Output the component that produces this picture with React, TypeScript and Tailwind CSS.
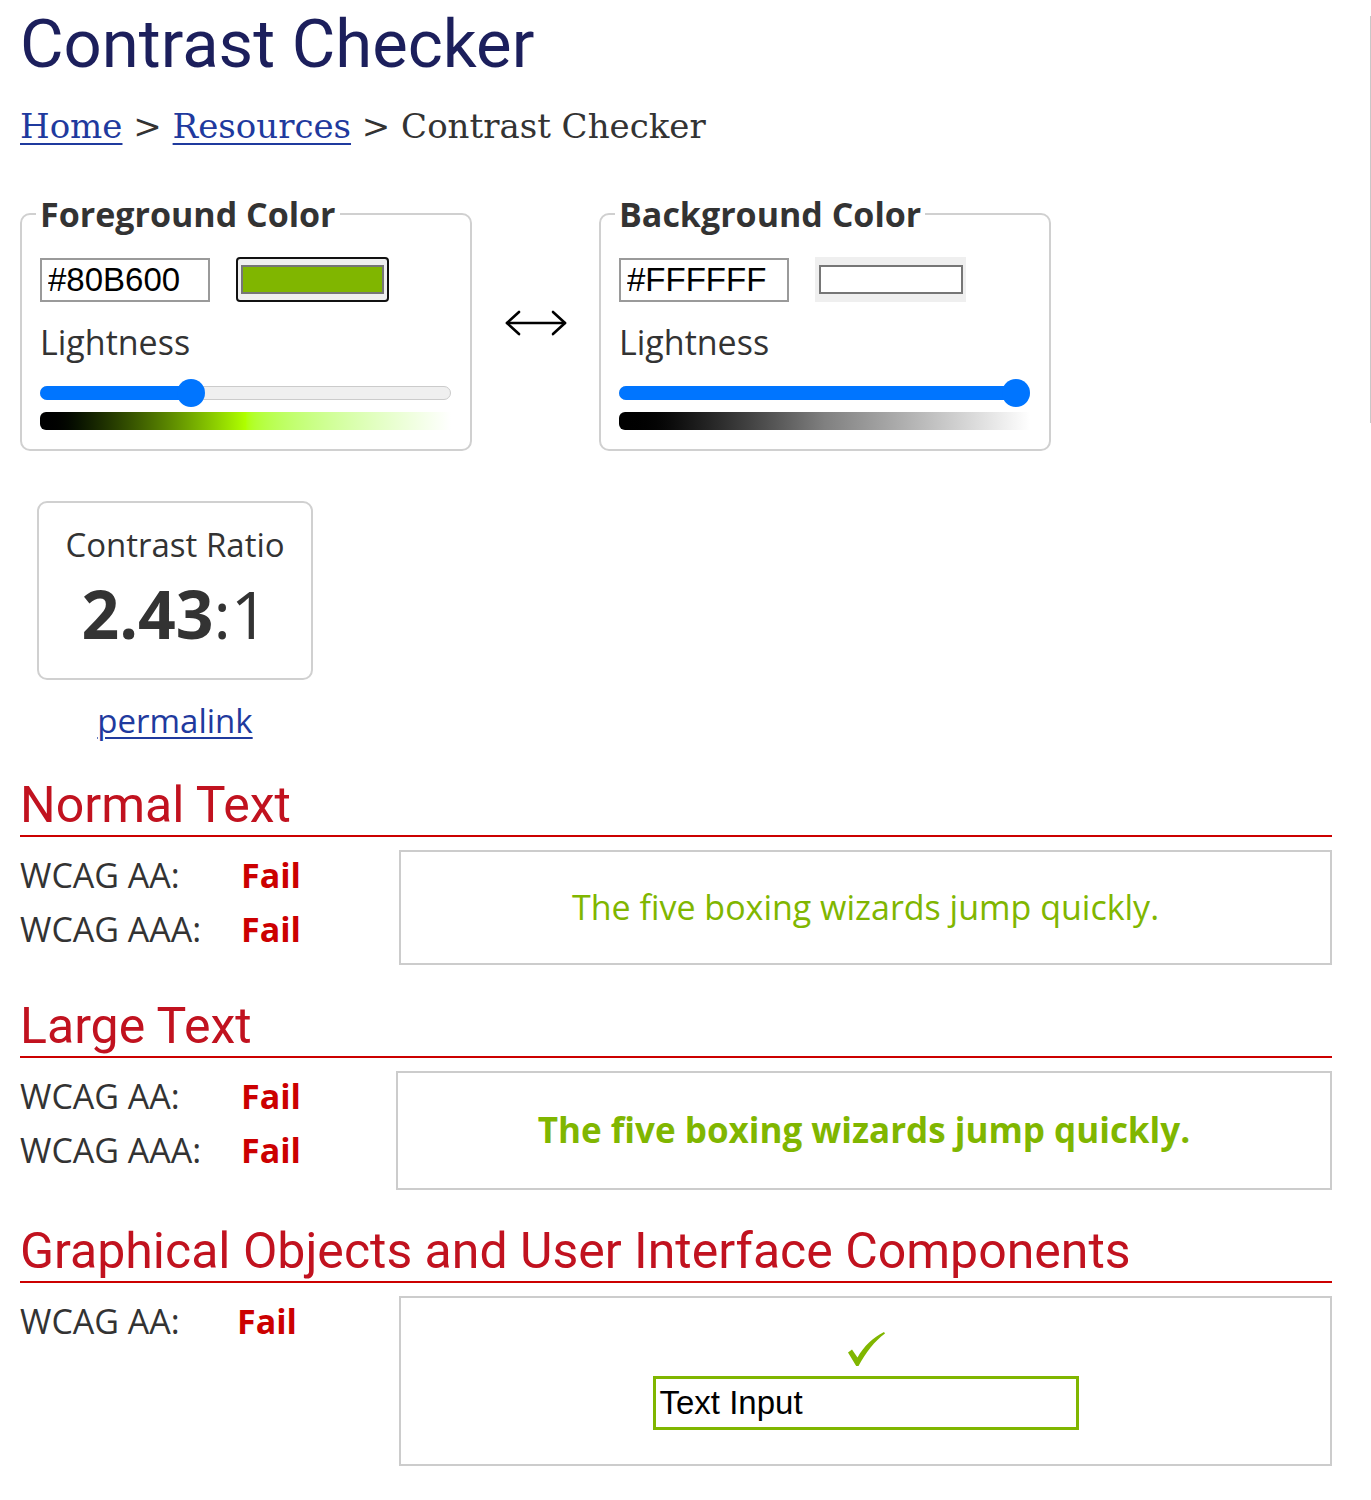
type ColorPickerProps = {
  legend: string;
  hex: string;
  swatchClass: string;
  focused?: boolean;
  value: number;
  gradientClass: string;
};

function Swatch({ swatchClass, focused }: { swatchClass: string; focused?: boolean }) {
  if (focused) {
    return (
      <div className="flex h-[45px] w-[153px] rounded-[4px] border-2 border-[#111] bg-[#efefef] px-[3px] py-[6px]">
        <div className={`flex-1 border-2 border-[#767676] ${swatchClass}`} />
      </div>
    );
  }
  return (
    <div className="flex h-[45px] w-[151px] bg-[#efefef] py-2 pl-1 pr-[3px]">
      <div className={`flex-1 border-2 border-[#767676] ${swatchClass}`} />
    </div>
  );
}

// value is 0..1, the thumb centre runs from 14px to (width - 14px)
function Slider({ value }: { value: number }) {
  return (
    <div className="relative h-7">
      <div className="absolute inset-x-0 top-[7px] h-[14px] rounded-full border border-[#cbcbcb] bg-[#efefef]" />
      <div
        className="absolute left-0 top-[7px] h-[14px] rounded-full bg-[#0075ff]"
        style={{ width: `calc(14px + ${value} * (100% - 28px))` }}
      />
      <div
        className="absolute top-0 h-7 w-7 rounded-full bg-[#0075ff]"
        style={{ left: `calc(${value} * (100% - 28px))` }}
      />
    </div>
  );
}

function ColorPicker({ legend, hex, swatchClass, focused, value, gradientClass }: ColorPickerProps) {
  return (
    <fieldset className="w-[452px] rounded-[10px] border-2 border-[#d0d0d0] pb-[19px] pl-[18px] pr-[19px] pt-6">
      <legend className="-ml-1 px-1 text-[34px] font-bold leading-[38px] text-[#333]">{legend}</legend>
      <div className="flex items-center gap-[26px]">
        <input
          type="text"
          readOnly
          value={hex}
          className="h-[44px] w-[170px] border-2 border-[#9a9a9a] px-[6px] font-['Liberation_Sans',Arial,sans-serif] text-[33px] text-black outline-none"
        />
        <Swatch swatchClass={swatchClass} focused={focused} />
      </div>
      <div className="mt-5 text-[34px] leading-[41px] text-[#333]">Lightness</div>
      <div className="mt-4">
        <Slider value={value} />
      </div>
      <div className={`mt-[5px] h-[18px] rounded-l-[6px] ${gradientClass}`} />
    </fieldset>
  );
}

function SwapArrow() {
  return (
    <svg width="64" height="26" viewBox="0 0 64 26" fill="none" stroke="#000" strokeWidth="2.6" strokeLinecap="round" strokeLinejoin="round">
      <path d="M3 13h58" />
      <path d="M15 2 3 13l12 11" />
      <path d="M49 2l12 11-12 11" />
    </svg>
  );
}

function Result({ label, labelWidth }: { label: string; labelWidth: string }) {
  return (
    <div className="flex">
      <span className={labelWidth}>{label}</span>
      <span className="font-bold text-[#cc0000]">Fail</span>
    </div>
  );
}

function Section({ title, children, className }: { title: string; children: React.ReactNode; className: string }) {
  return (
    <section className={className}>
      <h2 className="border-b-2 border-[#cc0000] font-['Roboto',sans-serif] text-[50px] leading-[60px] text-[#c1121f]">
        {title}
      </h2>
      <div className="mt-[13px] flex">{children}</div>
    </section>
  );
}

export default function App() {
  return (
    <div className="relative min-h-[1500px] bg-white pl-5 font-['Open_Sans',sans-serif] text-[#333]">
      <div className="absolute right-0 top-4 h-[407px] w-px bg-[#c8c8c8]" />
      <div className="w-[1312px] pt-1">
        <h1 className="font-['Roboto',sans-serif] text-[67px] leading-[80px] text-[#1c1f5c]">Contrast Checker</h1>

        <nav className="mt-[22px] font-['DejaVu_Serif',serif] text-[34px] leading-[40px] text-[#333]">
          <a href="#" className="text-[#1f3a9e] underline decoration-2 underline-offset-[5px]">
            Home
          </a>{' '}
          &gt;{' '}
          <a href="#" className="text-[#1f3a9e] underline decoration-2 underline-offset-[5px]">
            Resources
          </a>{' '}
          &gt; Contrast Checker
        </nav>

        <div className="mt-[49px] flex items-center">
          <ColorPicker
            legend="Foreground Color"
            hex="#80B600"
            swatchClass="bg-[#80b600]"
            focused
            value={0.357}
            gradientClass="bg-linear-to-r from-black via-[#afff00] to-white"
          />
          <div className="flex w-[127px] justify-center">
            <SwapArrow />
          </div>
          <ColorPicker
            legend="Background Color"
            hex="#FFFFFF"
            swatchClass="bg-white"
            value={1}
            gradientClass="bg-linear-to-r from-black via-[#808080] to-white"
          />
        </div>

        <div className="ml-[17px] mt-[50px] flex w-[276px] flex-col items-center">
          <div className="flex w-full flex-col items-center rounded-[10px] border-2 border-[#d0d0d0] pb-[30px] pt-[22px]">
            <div className="text-[33px] leading-[40px]">Contrast Ratio</div>
            <div className="mt-[13px] text-[66px] leading-[70px]">
              <span className="font-bold">2.43</span>:1
            </div>
          </div>
          <a href="#" className="mt-[21px] text-[33px] leading-[40px] text-[#1f3a9e] underline decoration-2 underline-offset-4">
            permalink
          </a>
        </div>

        <Section title="Normal Text" className="mt-[34px]">
          <div className="-mt-0.5 w-[379px] text-[34px] leading-[54px]">
            <Result label="WCAG AA:" labelWidth="w-[221px]" />
            <Result label="WCAG AAA:" labelWidth="w-[221px]" />
          </div>
          <div className="flex h-[115px] flex-1 items-center justify-center border-2 border-[#cccccc] text-[34px] text-[#80b600]">
            The five boxing wizards jump quickly.
          </div>
        </Section>

        <Section title="Large Text" className="mt-[31px]">
          <div className="-mt-0.5 w-[376px] text-[34px] leading-[54px]">
            <Result label="WCAG AA:" labelWidth="w-[221px]" />
            <Result label="WCAG AAA:" labelWidth="w-[221px]" />
          </div>
          <div className="flex h-[119px] flex-1 items-center justify-center border-2 border-[#cccccc] text-[35px] font-bold text-[#80b600]">
            The five boxing wizards jump quickly.
          </div>
        </Section>

        <Section title="Graphical Objects and User Interface Components" className="mt-[31px]">
          <div className="-mt-0.5 w-[379px] text-[34px] leading-[54px]">
            <Result label="WCAG AA:" labelWidth="w-[217px]" />
          </div>
          <div className="flex h-[170px] flex-1 flex-col items-center justify-center gap-[10px] border-2 border-[#cccccc]">
            <svg width="38" height="34" viewBox="0 0 38 34" fill="#80b600">
              <path d="M1 20.5 5 17.5 10.5 25.5C17 14 26 5.5 37 0l1 1.5C27.5 9.5 19 20 11.5 34H9.2Z" />
            </svg>
            <div className="flex h-[54px] w-[426px] items-center border-[3px] border-[#80b600] bg-white pl-1 font-['Liberation_Sans',Arial,sans-serif] text-[33px] text-black">
              Text Input
            </div>
          </div>
        </Section>
      </div>
    </div>
  );
}
